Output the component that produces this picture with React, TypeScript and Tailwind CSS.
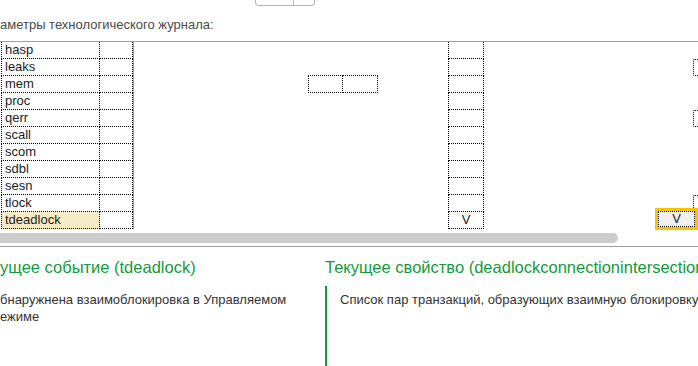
const names = [
  "hasp",
  "leaks",
  "mem",
  "proc",
  "qerr",
  "scall",
  "scom",
  "sdbl",
  "sesn",
  "tlock",
  "tdeadlock",
];

// rows that show a cut-off cell at the right edge
const edgeRows = ["leaks", "qerr", "tlock"];

function Row({ name }: { name: string }) {
  const selected = name === "tdeadlock";
  return (
    <div className="flex h-[17px] text-[13px] leading-[16px] text-[#1c1c1c]">
      {/* names + values */}
      <div className="flex w-[134px] pl-[1px] border-r border-[#a0a0a0]">
        <div
          className={`w-[99px] border-l border-r border-b border-dotted border-black pl-[3px] ${
            selected ? "bg-[#f6ecc6]" : ""
          }`}
        >
          {name}
        </div>
        <div className="w-[33px] border-r border-b border-dotted border-black" />
      </div>

      {/* wide column area */}
      <div className="flex flex-1">
        <div className="w-[174px]" />
        <div className="flex w-[70px]">
          {name === "mem" && (
            <>
              <div className="w-[35px] border border-dotted border-black -mt-[1px] h-[18px]" />
              <div className="w-[35px] border border-l-0 border-dotted border-black -mt-[1px] h-[18px]" />
            </>
          )}
        </div>
        <div className="w-[70px]" />
        <div className="w-[36px] border-l border-r border-b border-dotted border-black text-center leading-[15px]">
          {selected ? "V" : ""}
        </div>
        <div className="w-[171px]" />
        <div className="relative flex-1">
          {edgeRows.includes(name) && (
            <div className="ml-[38px] h-[17px] border-l border-t border-b border-dotted border-black rounded-l-[2px]" />
          )}
          {selected && (
            <div className="absolute left-0 -top-[4px] w-[43px] h-[22px] border-[3px] border-[#f5c400]">
              <div className="h-full bg-[#f0f0f0] border border-dotted border-black text-center leading-[14px]">
                V
              </div>
            </div>
          )}
        </div>
      </div>
    </div>
  );
}

export default function App() {
  return (
    <div className="w-[698px] h-[366px] overflow-hidden bg-white font-['Liberation_Sans',Arial,sans-serif]">
      {/* top bar */}
      <div className="h-[41px]">
        <div className="ml-[255px] w-[60px] h-[6px] flex border border-t-0 border-[#b5b5b5] rounded-b-[4px]">
          <div className="w-[38px] border-r border-[#b5b5b5]" />
        </div>
        <div className="mt-[11px] text-[13px] leading-[15px] text-[#4a4a4a] whitespace-nowrap">
          аметры технологического журнала:
        </div>
      </div>

      {/* table */}
      <div className="border-t border-[#a0a0a0]">
        {names.map((n) => (
          <Row key={n} name={n} />
        ))}
      </div>

      {/* scrollbar */}
      <div className="mt-[4px] h-[10px] w-[618px] bg-[#cccccc] rounded-r-[5px]" />
      <div className="mt-[3px] h-[1px] bg-[#9c9c9c]" />

      {/* bottom panes */}
      <div className="flex whitespace-nowrap">
        <div className="w-[325px] shrink-0 pt-[11px]">
          <div className="text-[16.5px] leading-[19px] text-[#129b3c]">
            ущее событие (tdeadlock)
          </div>
          <div className="mt-[14px] text-[13px] leading-[17px] text-[#333333]">
            <div>бнаружнена взаимоблокировка в Управляемом</div>
            <div>ежиме</div>
          </div>
        </div>
        <div className="min-w-0 flex-1 pt-[11px]">
          <div className="text-[16.5px] leading-[19px] text-[#129b3c]">
            Текущее свойство (deadlockconnectionintersectioninfo)
          </div>
          <div className="mt-[9px] h-[90px] border-l-2 border-[#129b3c] pl-[13px] pt-[5px] text-[13px] leading-[17px] text-[#333333]">
            Список пар транзакций, образующих взаимную блокировку
          </div>
        </div>
      </div>
    </div>
  );
}
